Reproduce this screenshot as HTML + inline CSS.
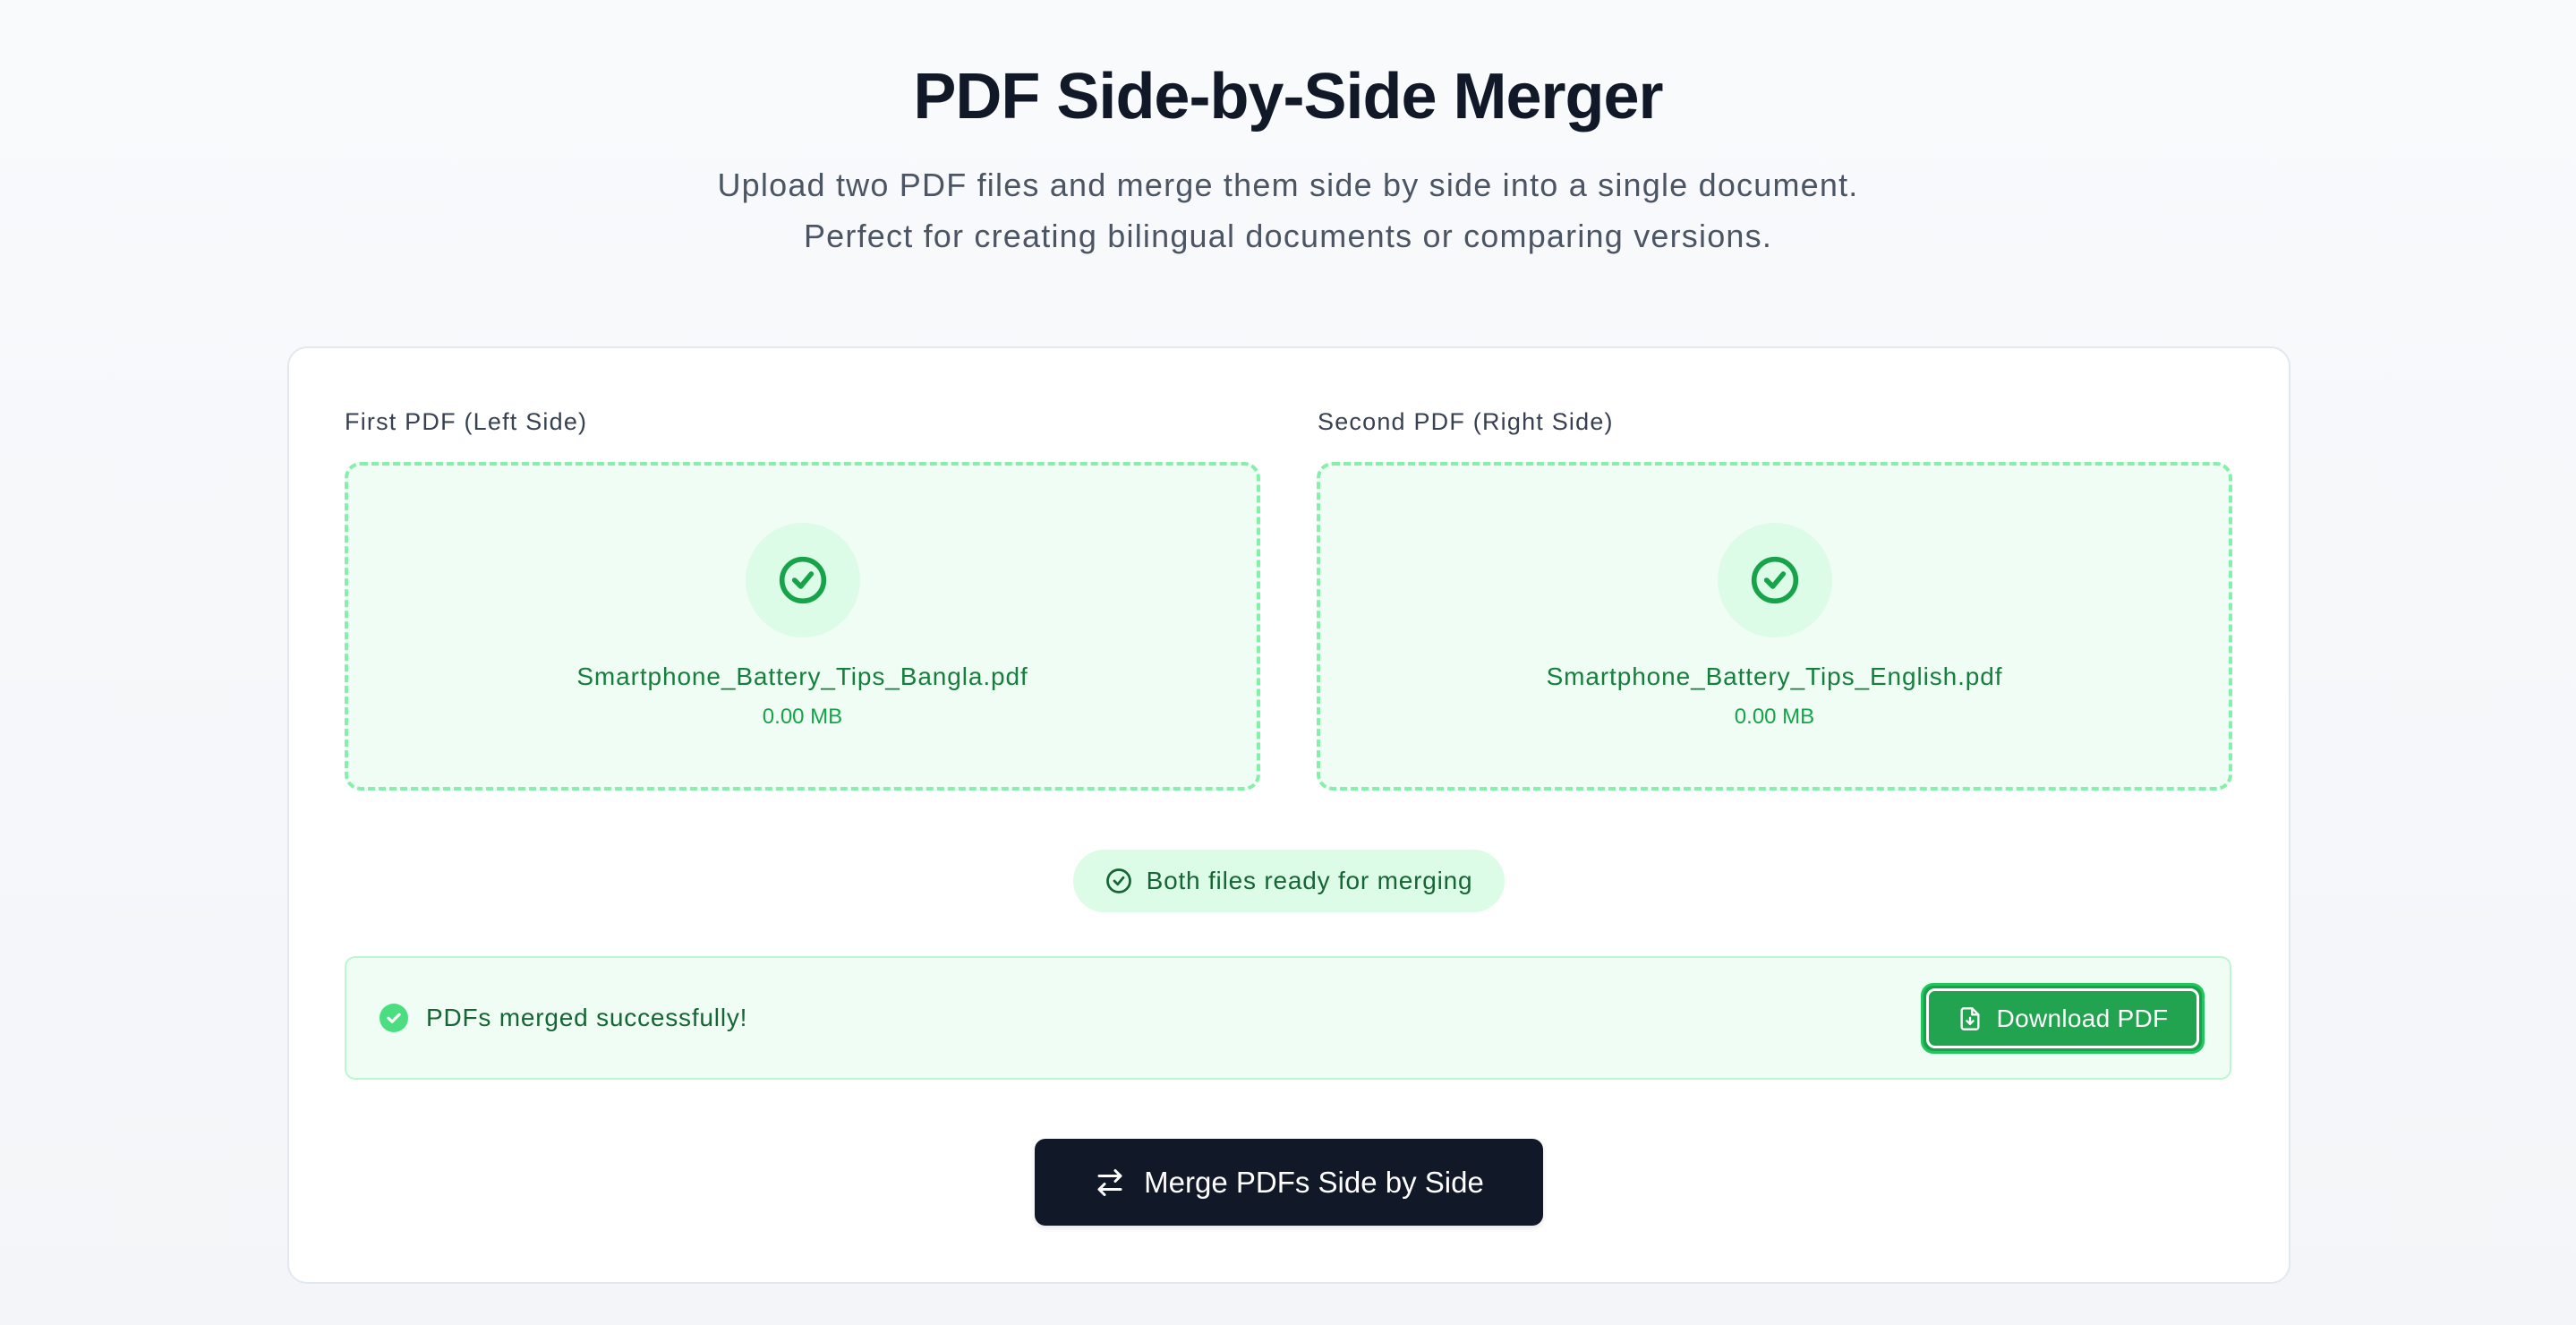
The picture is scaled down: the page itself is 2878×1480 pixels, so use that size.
<!DOCTYPE html>
<html><head><meta charset="utf-8"><style>
*{box-sizing:border-box;margin:0;padding:0}
html,body{width:2878px;height:1480px;overflow:hidden}
body{background:linear-gradient(180deg,#f8fafc,#f3f5f8);font-family:"Liberation Sans",sans-serif;position:relative;color:#0f172a}
.abs{position:absolute}
h1{position:absolute;left:0;width:2878px;top:67px;text-align:center;font-size:72px;font-weight:700;letter-spacing:-1px;color:#111827}
.sub{position:absolute;left:0;width:2878px;top:178px;text-align:center;font-size:36px;line-height:57px;color:#4b5563;letter-spacing:1.2px}
.card{left:321px;top:387px;width:2238px;height:1047px;background:#fff;border:2px solid #e2e8f0;border-radius:22px}
.lbl{font-size:27px;color:#374151;top:456px;letter-spacing:1.2px}
.dz{top:516px;width:1023px;height:367px;border:4px dashed #86efac;border-radius:18px;background:#f0fdf4}
.circ{position:absolute;left:50%;top:64px;width:128px;height:128px;margin-left:-64px;border-radius:50%;background:#dcfce7;display:flex;align-items:center;justify-content:center}
.fn{position:absolute;left:0;right:0;top:220px;text-align:center;font-size:28px;color:#15803d;letter-spacing:0.9px}
.mb{position:absolute;left:0;right:0;top:267px;text-align:center;font-size:24px;color:#16a34a}
.pill{left:1199px;top:949px;width:482px;height:70px;border-radius:35px;background:#dcfce7;display:flex;align-items:center;justify-content:center;gap:16px;font-size:28px;color:#166534;letter-spacing:0.8px}
.succ{left:385px;top:1068px;width:2108px;height:138px;border:2px solid #bbf7d0;border-radius:12px;background:#f0fdf4}
.dl{left:2146px;top:1098px;width:317px;height:79px;border-radius:14px;background:#16a34a;border:3px solid #22c55e;padding:3px}
.dl div{width:100%;height:100%;border-radius:10px;background:#22a34f;border:3px solid #fff;display:flex;align-items:center;justify-content:center;gap:16px;color:#fff;font-size:28px;letter-spacing:0.3px}
.merge{left:1156px;top:1272px;width:568px;height:97px;border-radius:12px;background:#111827;display:flex;align-items:center;justify-content:center;gap:20px;color:#fff;font-size:33px;box-shadow:0 3px 6px rgba(0,0,0,.1)}
</style></head><body>
<h1>PDF Side-by-Side Merger</h1>
<div class="sub">Upload two PDF files and merge them side by side into a single document.<br>Perfect for creating bilingual documents or comparing versions.</div>
<div class="abs card"></div>
<div class="abs lbl" style="left:385px">First PDF (Left Side)</div>
<div class="abs lbl" style="left:1472px">Second PDF (Right Side)</div>
<div class="abs dz" style="left:385px"><div class="circ"><svg width="56" height="56" viewBox="0 0 24 24" fill="none" stroke="#16a34a" stroke-width="2.4" stroke-linecap="round" stroke-linejoin="round"><circle cx="12" cy="12" r="10"/><path d="M8 12l3 3 5-6"/></svg></div><div class="fn">Smartphone_Battery_Tips_Bangla.pdf</div><div class="mb">0.00 MB</div></div>
<div class="abs dz" style="left:1471px"><div class="circ"><svg width="56" height="56" viewBox="0 0 24 24" fill="none" stroke="#16a34a" stroke-width="2.4" stroke-linecap="round" stroke-linejoin="round"><circle cx="12" cy="12" r="10"/><path d="M8 12l3 3 5-6"/></svg></div><div class="fn">Smartphone_Battery_Tips_English.pdf</div><div class="mb">0.00 MB</div></div>
<div class="abs pill"><svg width="30" height="30" viewBox="0 0 24 24" fill="none" stroke="#166534" stroke-width="2.2" stroke-linecap="round" stroke-linejoin="round"><circle cx="12" cy="12" r="10"/><path d="M8 12l3 3 5-6"/></svg>Both files ready for merging</div>
<div class="abs succ"></div>
<svg class="abs" style="left:424px;top:1121px" width="32" height="32" viewBox="0 0 24 24"><circle cx="12" cy="12" r="12" fill="#4ade80"/><path d="M7.5 12.2l3 3 6-6" fill="none" stroke="#fff" stroke-width="2.4" stroke-linecap="round" stroke-linejoin="round"/></svg>
<div class="abs" style="left:476px;top:1121px;font-size:28px;color:#166534;letter-spacing:0.8px">PDFs merged successfully!</div>
<div class="abs dl"><div><svg width="28" height="28" viewBox="0 0 24 24" fill="none" stroke="#fff" stroke-width="2" stroke-linecap="round" stroke-linejoin="round"><path d="M14 2H6a2 2 0 0 0-2 2v16a2 2 0 0 0 2 2h12a2 2 0 0 0 2-2V8z"/><path d="M14 2v6h6"/><path d="M12 11v6M9 14l3 3 3-3"/></svg>Download PDF</div></div>
<div class="abs merge"><svg width="36" height="36" viewBox="0 0 24 24" fill="none" stroke="#fff" stroke-width="2" stroke-linecap="round" stroke-linejoin="round"><path d="M16 3l4 4-4 4M20 7H4M8 21l-4-4 4-4M4 17h16"/></svg>Merge PDFs Side by Side</div>
</body></html>
